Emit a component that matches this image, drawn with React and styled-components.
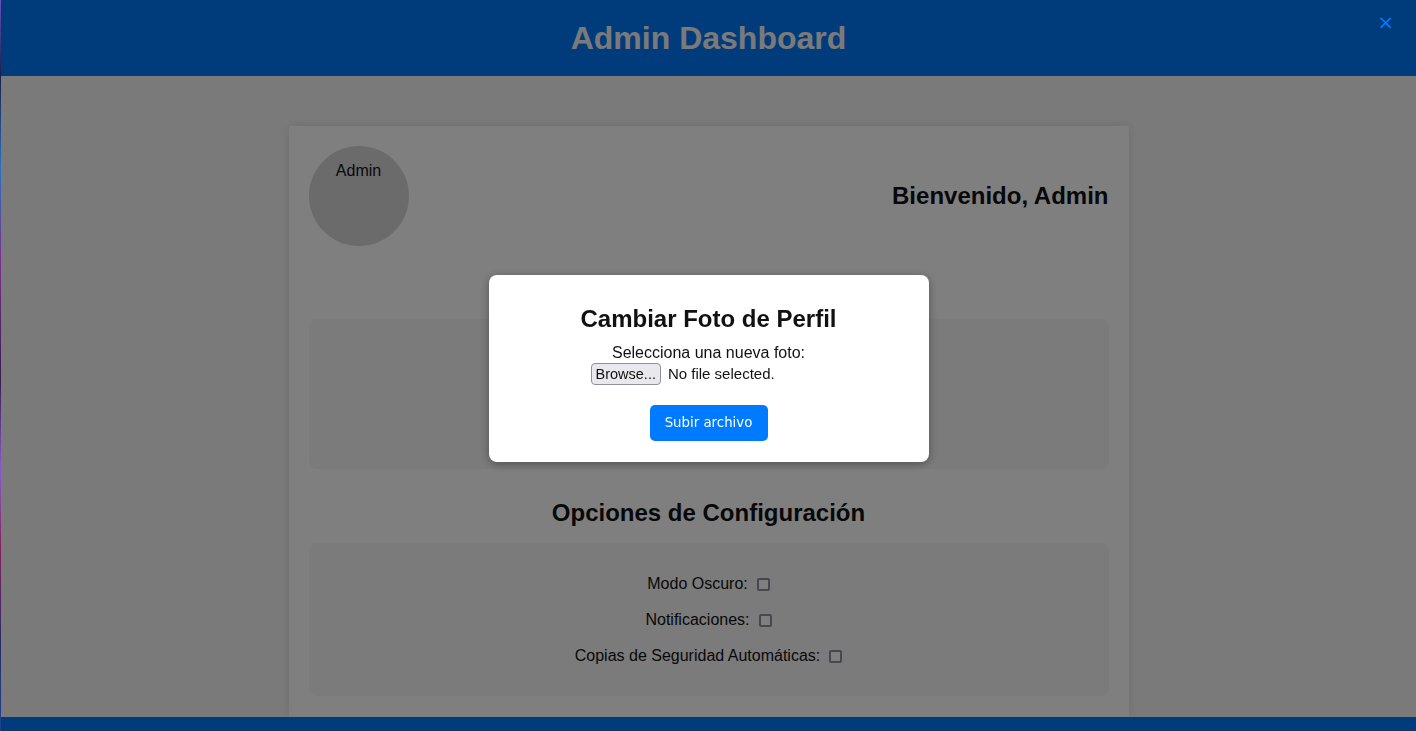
import React from 'react';
import styled, { createGlobalStyle } from 'styled-components';

const GlobalStyle = createGlobalStyle`
  html {
    background: linear-gradient(#6a4fc0 0%, #1a1f4a 10%, #2a70c0 22%, #7a2f90 35%, #3a1a50 50%, #8a5ad0 62%, #8a2060 72%, #2a2a6a 85%, #1a4a9a 100%);
  }
  html, body {
    margin: 0;
    padding: 0;
    overflow: hidden;
  }
  body {
    margin-left: 1px;
    background: #f5f5f5;
    font-family: "Liberation Sans", Arial, sans-serif;
    color: #111;
  }
`;

const Page = styled.div`
  min-height: 100vh;
  display: flex;
  flex-direction: column;
`;

const Header = styled.header`
  height: 76px;
  background: #0077f8;
  display: flex;
  align-items: center;
  justify-content: center;
`;

const HeaderTitle = styled.h1`
  margin: 0;
  font-size: 32px;
  font-weight: bold;
  color: #f5f5f5;
`;

const Card = styled.main`
  width: 800px;
  margin: 50px auto 0;
  padding: 20px 20px 21px;
  background: #fff;
  box-shadow: 0 0 10px rgba(0, 0, 0, 0.1);
`;

const ProfileRow = styled.div`
  display: flex;
  align-items: center;
  justify-content: space-between;
  margin-bottom: 73px;
`;

const Avatar = styled.div`
  width: 100px;
  height: 100px;
  border-radius: 50%;
  background: #d6d6d6;
  font-size: 16px;
  line-height: 18px;
  text-align: center;
  padding-top: 16px;
  box-sizing: border-box;
`;

const Welcome = styled.h2`
  margin: 0;
  font-size: 24px;
  font-weight: bold;
`;

const SectionTitle = styled.h2`
  margin: 30px 0 16px;
  font-size: 24px;
  line-height: 28px;
  font-weight: bold;
  text-align: center;
`;

const Panel = styled.section`
  background: #f6f6f6;
  border-radius: 8px;
  min-height: ${p => p.$minHeight || 0}px;
  box-sizing: border-box;
  padding: 23px 20px 22px;
  display: flex;
  flex-direction: column;
  align-items: center;
`;

const OptionRow = styled.label`
  display: flex;
  align-items: center;
  height: 20px;
  margin: 8px 0;
  font-size: 16px;
`;

const Check = styled.input`
  appearance: none;
  width: 13px;
  height: 13px;
  margin: 0 0 0 9px;
  border: 2px solid #8f8f9d;
  border-radius: 2px;
  background: #fff;
`;

const Footer = styled.footer`
  height: 40px;
  background: #0077f8;
`;

const Overlay = styled.div`
  position: fixed;
  top: 0;
  right: 0;
  bottom: 0;
  left: 1px;
  padding-top: 5px;
  background: rgba(0, 0, 0, 0.5);
  display: flex;
  align-items: center;
  justify-content: center;
`;

const CloseButton = styled.button`
  position: fixed;
  top: 10px;
  right: 22px;
  background: none;
  border: none;
  padding: 0;
  color: #007bff;
  font-family: "DejaVu Sans", sans-serif;
  font-size: 20px;
  line-height: 24px;
  cursor: pointer;
`;

const Modal = styled.div`
  width: 440px;
  box-sizing: border-box;
  padding: 30px 20px 21px;
  background: #fff;
  border-radius: 8px;
  box-shadow: 0 2px 10px rgba(0, 0, 0, 0.35);
  display: flex;
  flex-direction: column;
  align-items: center;
`;

const ModalTitle = styled.h2`
  margin: 0 0 11px;
  font-size: 24px;
  line-height: 28px;
  font-weight: bold;
`;

const FieldLabel = styled.div`
  font-size: 16px;
  line-height: 18px;
`;

const FileInput = styled.div`
  width: 236px;
  height: 22px;
  margin-top: 1px;
  display: flex;
  align-items: center;
  gap: 7px;
  font-size: 15px;
`;

const BrowseButton = styled.span`
  height: 22px;
  box-sizing: border-box;
  padding: 0 4px;
  display: flex;
  align-items: center;
  background: #e9e9ed;
  border: 1px solid #8f8f9d;
  border-radius: 4px;
  font-size: 14.5px;
`;

const UploadButton = styled.button`
  margin-top: 20px;
  width: 118px;
  height: 36px;
  background: #007bff;
  color: #fff;
  border: none;
  border-radius: 5px;
  font-family: "DejaVu Sans", sans-serif;
  font-size: 13.33px;
  cursor: pointer;
`;

const settings = ['Modo Oscuro:', 'Notificaciones:', 'Copias de Seguridad Automáticas:'];

export default function App() {
  return (
    <>
      <GlobalStyle />
      <Page>
        <Header>
          <HeaderTitle>Admin Dashboard</HeaderTitle>
        </Header>
        <Card>
          <ProfileRow>
            <Avatar>Admin</Avatar>
            <Welcome>Bienvenido, Admin</Welcome>
          </ProfileRow>

          {/* profile details sit behind the open modal */}
          <Panel $minHeight={150} />

          <SectionTitle>Opciones de Configuración</SectionTitle>
          <Panel>
            {settings.map(item => (
              <OptionRow key={item}>
                {item}
                <Check type="checkbox" />
              </OptionRow>
            ))}
          </Panel>
        </Card>
        <Footer />
      </Page>

      <Overlay>
        <Modal>
          <ModalTitle>Cambiar Foto de Perfil</ModalTitle>
          <FieldLabel>Selecciona una nueva foto:</FieldLabel>
          <FileInput>
            <BrowseButton>Browse...</BrowseButton>
            No file selected.
          </FileInput>
          <UploadButton>Subir archivo</UploadButton>
        </Modal>
      </Overlay>
      <CloseButton>×</CloseButton>
    </>
  );
}
